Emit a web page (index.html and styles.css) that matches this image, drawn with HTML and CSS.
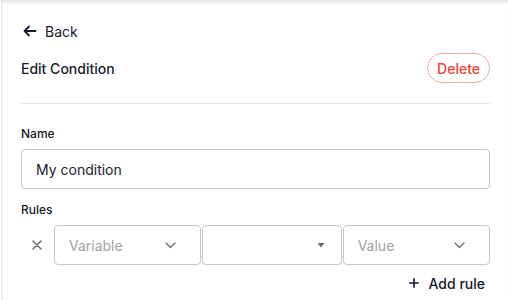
FILE: index.html
```html
<!DOCTYPE html>
<html lang="en">
<head>
    <meta charset="UTF-8">
    <meta name="viewport" content="width=device-width, initial-scale=1.0">
    <title>Edit Condition</title>
    <link rel="stylesheet" href="styles.css">
</head>
<body>
    <div class="panel">
        <a class="back-link" href="#">
            <svg xmlns="http://www.w3.org/2000/svg" width="14" height="14" viewBox="0 0 14 14" fill="none" stroke="currentColor" stroke-width="1.8" stroke-linecap="round" stroke-linejoin="round">
                <path d="M12.5 7H1.5M6 2.5L1.5 7L6 11.5"></path>
            </svg>
            <span>Back</span>
        </a>

        <div class="panel-header">
            <h2>Edit Condition</h2>
            <button class="delete-btn">Delete</button>
        </div>

        <div class="field">
            <label class="field-label">Name</label>
            <input class="text-input" type="text" value="My condition">
        </div>

        <div class="field">
            <label class="field-label">Rules</label>
            <div class="rule-row">
                <button class="remove-rule">
                    <svg xmlns="http://www.w3.org/2000/svg" width="10" height="10" viewBox="0 0 10 10" fill="none" stroke="currentColor" stroke-width="1.5" stroke-linecap="round">
                        <path d="M1 1l8 8M9 1l-8 8"></path>
                    </svg>
                </button>
                <div class="select">
                    <span class="placeholder">Variable</span>
                    <svg xmlns="http://www.w3.org/2000/svg" width="11" height="7" viewBox="0 0 11 7" fill="none" stroke="currentColor" stroke-width="1.4" stroke-linecap="round" stroke-linejoin="round">
                        <path d="M1 1l4.5 4.5L10 1"></path>
                    </svg>
                </div>
                <div class="select select-native">
                    <span class="placeholder"></span>
                    <svg xmlns="http://www.w3.org/2000/svg" width="8" height="5" viewBox="0 0 8 5" fill="currentColor">
                        <path d="M0.5 0h7L4 4.5z"></path>
                    </svg>
                </div>
                <div class="select">
                    <span class="placeholder">Value</span>
                    <svg xmlns="http://www.w3.org/2000/svg" width="11" height="7" viewBox="0 0 11 7" fill="none" stroke="currentColor" stroke-width="1.4" stroke-linecap="round" stroke-linejoin="round">
                        <path d="M1 1l4.5 4.5L10 1"></path>
                    </svg>
                </div>
            </div>
            <div class="rule-actions">
                <button class="add-rule">
                    <svg xmlns="http://www.w3.org/2000/svg" width="10" height="10" viewBox="0 0 10 10" fill="none" stroke="currentColor" stroke-width="1.6" stroke-linecap="round">
                        <path d="M5 0.8v8.4M0.8 5h8.4"></path>
                    </svg>
                    <span>Add rule</span>
                </button>
            </div>
        </div>
    </div>
</body>
</html>
```

FILE: styles.css
```css
* {
    box-sizing: border-box;
}
body {
    margin: 0;
    font-family: Inter, "Noto Sans", sans-serif;
    color: #161b2b;
    background: #fff;
}
.panel {
    margin-left: 1px;
    border-left: 1px solid #e3e7ee;
    min-height: 300px;
    padding: 21px 18px 0 19px;
    box-shadow: inset 0 5px 5px -3px rgba(0, 0, 0, 0.12);
}
.back-link {
    display: flex;
    align-items: center;
    gap: 8px;
    height: 20px;
    padding-left: 2px;
    font-size: 14px;
    color: #161b2b;
    text-decoration: none;
}
.panel-header {
    display: flex;
    align-items: center;
    justify-content: space-between;
    margin-top: 12px;
    padding-bottom: 20px;
    border-bottom: 1px solid #e6e8f0;
}
.panel-header h2 {
    margin: 0;
    font-size: 14px;
    font-weight: 500;
}
.delete-btn {
    height: 30px;
    padding: 0 9px;
    border: 1px solid #f9a8a3;
    border-radius: 15px;
    background: #fff;
    color: #ef4136;
    font-family: inherit;
    font-size: 14px;
    font-weight: 500;
}
.field {
    display: flex;
    flex-direction: column;
    gap: 7px;
    margin-top: 22px;
}
.field + .field {
    margin-top: 13px;
}
.field-label {
    font-size: 12px;
    line-height: 16px;
    font-weight: 500;
}
.text-input {
    height: 40px;
    padding: 0 14px;
    border: 1px solid #c6c6c6;
    border-radius: 4px;
    font-family: inherit;
    font-size: 14px;
    color: #1c2130;
    outline: none;
}
.rule-row {
    display: flex;
    gap: 1px;
    height: 40px;
}
.remove-rule {
    width: 32px;
    flex: none;
    display: flex;
    align-items: center;
    justify-content: center;
    padding: 0 1px 0 0;
    border: none;
    background: none;
    color: #6b6b6b;
}
.select {
    flex: 1 1 0;
    min-width: 0;
    display: flex;
    align-items: center;
    justify-content: space-between;
    padding: 0 24px 0 14px;
    border: 1px solid #c6c6c6;
    border-radius: 4px;
    color: #707070;
}
.select-native {
    padding-right: 16px;
}
.placeholder {
    font-size: 14px;
    color: #a3a3a3;
}
.rule-actions {
    display: flex;
    justify-content: flex-end;
    margin-top: -5px;
}
.add-rule {
    display: flex;
    align-items: center;
    gap: 10px;
    height: 32px;
    padding: 0 5px 0 8px;
    border: none;
    background: none;
    color: #161b2b;
    font-family: inherit;
    font-size: 14px;
    font-weight: 500;
}
```
